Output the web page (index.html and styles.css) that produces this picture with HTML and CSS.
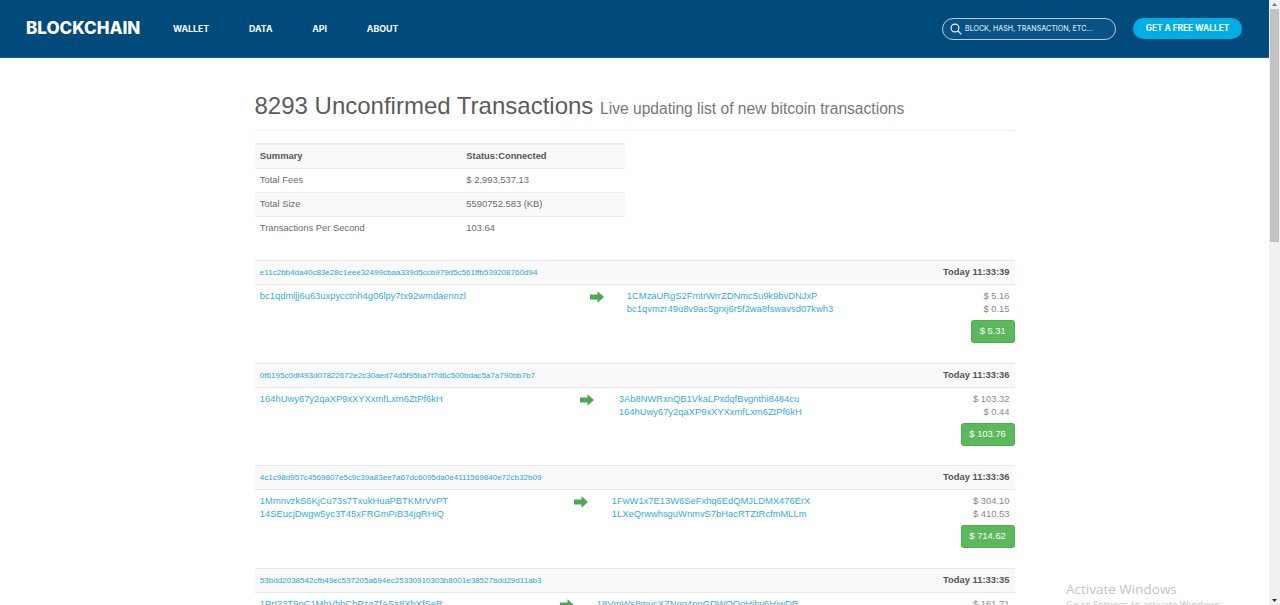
FILE: index.html
```html
<!DOCTYPE html>
<html lang="en">
<head>
<meta charset="utf-8">
<title>Unconfirmed Transactions</title>
<link rel="stylesheet" href="styles.css">
</head>
<body>
<div class="viewport">
  <header class="topbar">
    <a class="logo">BLOCKCHAIN</a>
    <nav class="nav">
      <a>WALLET</a>
      <a>DATA</a>
      <a>API</a>
      <a>ABOUT</a>
    </nav>
    <div class="search">
      <svg class="search-icon" width="12" height="12" viewBox="0 0 12 12"><circle cx="5" cy="5" r="3.9" fill="none" stroke="#fff" stroke-width="1.1"/><path d="M8 8l3.3 3.3" stroke="#fff" stroke-width="1.2" fill="none"/></svg>
      <span>BLOCK, HASH, TRANSACTION, ETC...</span>
    </div>
    <a class="cta">GET A FREE WALLET</a>
  </header>

  <main class="container">
    <div class="page-head">
      <h1>8293 Unconfirmed Transactions <small>Live updating list of new bitcoin transactions</small></h1>
    </div>

    <table class="summary">
      <tr class="head"><th>Summary</th><th>Status:Connected</th></tr>
      <tr><td>Total Fees</td><td>$ 2,993,537.13</td></tr>
      <tr class="alt"><td>Total Size</td><td>5590752.583 (KB)</td></tr>
      <tr><td>Transactions Per Second</td><td>103.64</td></tr>
    </table>

    <section class="tx tx-a">
      <div class="tx-head"><a>e11c2bb4da40c83e28c1eee32499cbaa339d5ccb979d5c561ffb539208760d94</a><b>Today 11:33:39</b></div>
      <div class="tx-body">
        <div class="addrs"><a>bc1qdmljj6u63uxpycctnh4g06lpy7tx92wmdaennzl</a></div>
        <svg class="arrow" width="14" height="12" viewBox="0 0 14 12"><path d="M0 3.5h7.5V0.3L14 6l-6.5 5.7V8.5H0z"/></svg>
        <div class="addrs"><a>1CMzaURgS2FmtrWrrZDNmc5u9k9bvDNJxP</a><a>bc1qvmzr49u8v9ac5grxj6r5f2wa8fswavsd07kwh3</a></div>
        <div class="vals"><span>$ 5.16</span><span>$ 0.15</span><em>$ 5.31</em></div>
      </div>
    </section>

    <section class="tx tx-b">
      <div class="tx-head"><a>0f6195c0df493d07822672e2c30aed74d5f95ba7f7d6c500bdac5a7a790bb7b7</a><b>Today 11:33:36</b></div>
      <div class="tx-body">
        <div class="addrs"><a>164hUwy67y2qaXP9xXYXxmfLxm6ZtPf6kH</a></div>
        <svg class="arrow" width="14" height="12" viewBox="0 0 14 12"><path d="M0 3.5h7.5V0.3L14 6l-6.5 5.7V8.5H0z"/></svg>
        <div class="addrs"><a>3Ab8NWRxnQB1VkaLPxdqfBvgnthi8484cu</a><a>164hUwy67y2qaXP9xXYXxmfLxm6ZtPf6kH</a></div>
        <div class="vals"><span>$ 103.32</span><span>$ 0.44</span><em>$ 103.76</em></div>
      </div>
    </section>

    <section class="tx tx-c">
      <div class="tx-head"><a>4c1c98d957c4569807e5c9c39a83ee7a67dc6095da0e4111569840e72cb32b09</a><b>Today 11:33:36</b></div>
      <div class="tx-body">
        <div class="addrs"><a>1MmnvzkS6KjCu73s7TxukHuaPBTKMrVvPT</a><a>14SEucjDwgw5yc3T45xFRGmPiB34jqRHiQ</a></div>
        <svg class="arrow" width="14" height="12" viewBox="0 0 14 12"><path d="M0 3.5h7.5V0.3L14 6l-6.5 5.7V8.5H0z"/></svg>
        <div class="addrs"><a>1FwW1x7E13W6SeFxhq6EdQMJLDMX476ErX</a><a>1LXeQrwwhsguWnmvS7bHacRTZtRcfmMLLm</a></div>
        <div class="vals"><span>$ 304.10</span><span>$ 410.53</span><em>$ 714.62</em></div>
      </div>
    </section>

    <section class="tx tx-d">
      <div class="tx-head"><a>53bdd2038542cfb49ec537205a694ec25330910303b8001e38527bdd29d11ab3</a><b>Today 11:33:35</b></div>
      <div class="tx-body">
        <div class="addrs"><a>1Prt23T9nC1MhVbhChPzaZfASs8XbXfSeR</a></div>
        <svg class="arrow" width="14" height="12" viewBox="0 0 14 12"><path d="M0 3.5h7.5V0.3L14 6l-6.5 5.7V8.5H0z"/></svg>
        <div class="addrs"><a>18VmWs8mucXZNgq4npGDWQOoHjbv6HiwDR</a></div>
        <div class="vals"><span>$ 161.71</span></div>
      </div>
    </section>
  </main>

  <div class="watermark">
    <div class="wm-title">Activate Windows</div>
    <div class="wm-sub">Go to Settings to activate Windows.</div>
  </div>
</div>
<div class="scrollbar" aria-hidden="true">
  <svg class="sb-arrow" width="11" height="9" viewBox="0 0 11 9"><path d="M3 6l2.5-3L8 6z" fill="#777"/></svg>
  <div class="sb-thumb"></div>
  <svg class="sb-arrow sb-end" width="11" height="9" viewBox="0 0 11 9"><path d="M3 3l2.5 3L8 3z" fill="#333"/></svg>
</div>
</body>
</html>
```
FILE: styles.css
```css
* { box-sizing: border-box; }
html, body { margin: 0; height: 100%; overflow: hidden; background: #fff; }
body {
  display: flex;
  font-family: "Liberation Sans", Arial, sans-serif;
  font-size: 9.38px;
  line-height: 15px;
  color: #6b6b6b;
}
.viewport { position: relative; flex: 1; min-width: 0; height: 605px; overflow: hidden; }

.topbar {
  display: flex;
  align-items: center;
  height: 58px;
  padding: 0 27px 0 26px;
  background: #004a7c;
  border-bottom: 1px solid #1d5f8d;
  font-family: Inter, "Open Sans", sans-serif;
  color: #fff;
}
.logo { font-size: 17px; font-weight: 800; width: 147px; }
.nav { display: flex; gap: 39.8px; font-size: 8.8px; font-weight: 700; }
.search {
  display: flex;
  align-items: center;
  gap: 3px;
  width: 174px;
  height: 22px;
  margin-left: auto;
  padding: 0 7px;
  border: 1px solid #b8cbd9;
  border-radius: 11px;
  background: #0a5285;
  font-size: 7.1px;
  font-weight: 500;
  color: #d5e1ea;
}
.search span { white-space: nowrap; }
.search-icon { flex: none; }
.cta {
  display: flex;
  align-items: center;
  justify-content: center;
  width: 109px;
  height: 21px;
  margin-left: 17px;
  border-radius: 11px;
  background: #00aee6;
  font-size: 8.3px;
  font-weight: 700;
}

.container { width: 760px; margin: 0 auto; }

.page-head { margin-top: 31px; padding-bottom: 8px; border-bottom: 1px solid #eee; }
h1 { margin: 0; font-size: 24px; line-height: 33px; font-weight: 400; color: #5c5c5c; white-space: nowrap; }
h1 small { font-size: 15.6px; line-height: 1; font-weight: 400; color: #777; }

.summary {
  width: 370px;
  margin-top: 12px;
  border-collapse: collapse;
  table-layout: fixed;
}
.summary th, .summary td {
  height: 24px;
  padding: 0 5.36px;
  border-top: 1px solid #eee;
  text-align: left;
  font-weight: 400;
}
.summary th:first-child, .summary td:first-child { width: 206.5px; }
.summary .head th { border-top: 2px solid #eee; background: #f9f9f9; font-weight: 700; color: #555; }
.summary .alt td { background: #f9f9f9; }

.tx { height: 102.67px; }
.summary + .tx { margin-top: 20px; }
.tx-head {
  display: flex;
  justify-content: space-between;
  align-items: center;
  height: 25px;
  padding: 0 0 0 5.36px;
  border-top: 1px solid #e8e8e8;
  border-bottom: 1px solid #e8e8e8;
  background: #f9f9f9;
}
.tx-head a { font-size: 8.04px; color: #26a8e0; }
.tx-head b { padding-right: 5px; color: #555; }
.tx-body { display: grid; padding: 5px 0 0 5.36px; align-items: start; }
.tx-a .tx-body { grid-template-columns: 330px 37px 1fr auto; }
.tx-b .tx-body { grid-template-columns: 320px 39px 1fr auto; }
.tx-c .tx-body { grid-template-columns: 314px 38px 1fr auto; }
.tx-d .tx-body { grid-template-columns: 300px 37px 1fr auto; }
.addrs { display: flex; flex-direction: column; }
.addrs a { color: #35ace2; line-height: 13px; white-space: nowrap; }
.arrow { fill: #4ea852; margin-top: 1px; }
.vals { display: flex; flex-direction: column; align-items: flex-end; color: #888; }
.vals span { line-height: 13px; padding-right: 5px; }
.vals em {
  margin-top: 4px;
  padding: 3px 7.7px;
  border: 1px solid #4cae4c;
  border-radius: 2.5px;
  background: #5cb85c;
  color: #fff;
  font-style: normal;
}

.watermark {
  position: absolute;
  left: 1066px;
  top: 580px;
  font-family: "Open Sans", sans-serif;
  color: #c4c4c4;
  white-space: nowrap;
}
.wm-title { font-size: 13.5px; line-height: 18px; }
.wm-sub { font-size: 9.6px; line-height: 14px; }

.scrollbar {
  display: flex;
  flex-direction: column;
  flex: none;
  width: 11px;
  height: 605px;
  background: #f1f1f1;
}
.sb-arrow { flex: none; }
.sb-thumb { height: 233px; margin: 0 1px; background: #c1c1c1; }
.sb-end { margin-top: auto; }
```
